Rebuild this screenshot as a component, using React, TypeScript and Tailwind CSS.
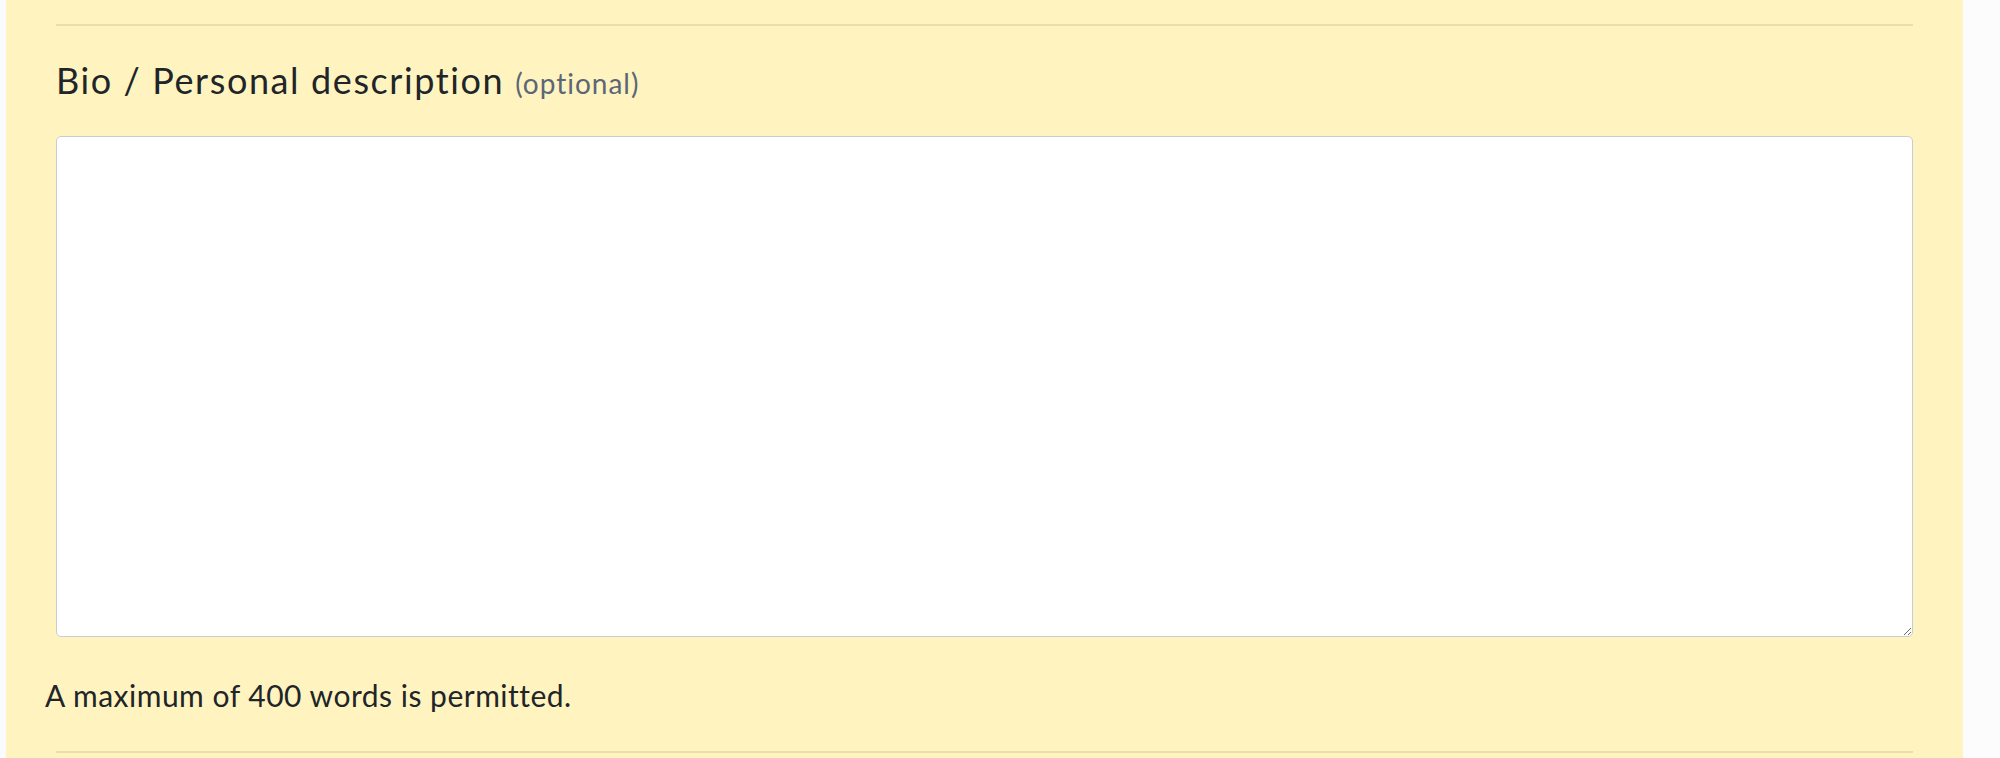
export default function App() {
  return (
    <div className="flex min-h-[758px] w-[2000px] bg-[#fcfcfc] font-['Lato',sans-serif] text-[#212529] [font-variant-ligatures:none]">
      <div className="w-[6px] shrink-0 bg-[#fbfbfb]" />
      <section className="w-[1957px] shrink-0 bg-[#fff4bf] px-[50px] pt-[24px]">
        <div className="h-[2px] bg-[#e9dfa9]" />
        <label htmlFor="bio" className="mt-[33px] block text-[36px] leading-[43px] tracking-[1.6px]">
          Bio / Personal description{" "}
          <span className="text-[28px] leading-none tracking-[1px] text-[#5c6677]">(optional)</span>
        </label>
        <textarea
          id="bio"
          className="mt-[34px] block h-[501px] w-full rounded-[5px] border border-[#c7ccd5] bg-white"
        />
        <p className="ml-[-11px] mt-[40px] text-[30px] leading-[36px] tracking-[0.5px]">
          A maximum of 400 words is permitted.
        </p>
        <div className="mt-[38px] h-[2px] bg-[#e9dfa9]" />
      </section>
    </div>
  );
}
